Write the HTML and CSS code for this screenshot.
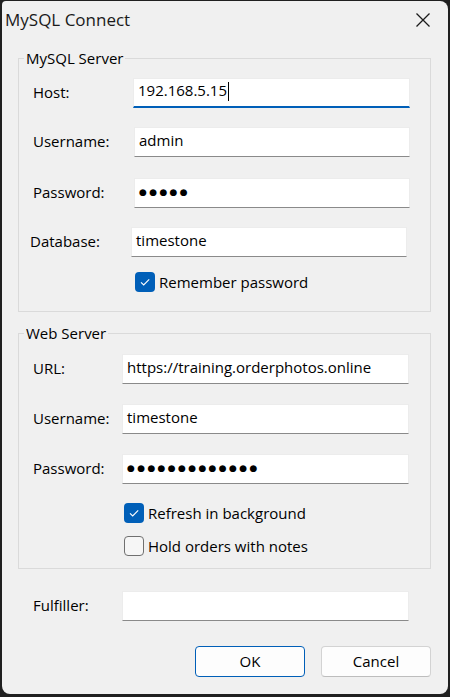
FILE: index.html
```html
<!DOCTYPE html>
<html lang="en">
<head>
<meta charset="utf-8">
<title>MySQL Connect</title>
<link rel="stylesheet" href="styles.css">
</head>
<body>
<div class="window">
  <div class="titlebar">
    <span class="title">MySQL Connect</span>
    <span class="close">
      <svg width="16" height="16" viewBox="0 0 16 16"><path d="M1.5 1.5 L14.5 14.5 M14.5 1.5 L1.5 14.5" stroke="#1b1b1b" stroke-width="1.3" fill="none"/></svg>
    </span>
  </div>
  <div class="content">
    <fieldset class="group g1">
      <legend>MySQL Server</legend>
      <div class="row">
        <span class="lbl w100">Host:</span>
        <div class="edit focused w277">192.168.5.15<span class="caret"></span></div>
      </div>
      <div class="row mt19">
        <span class="lbl w101">Username:</span>
        <div class="edit w276">admin</div>
      </div>
      <div class="row mt21">
        <span class="lbl w101">Password:</span>
        <div class="edit w276"><span class="dots">●●●●●</span></div>
      </div>
      <div class="row mt19 shift-left">
        <span class="lbl w101">Database:</span>
        <div class="edit w276">timestone</div>
      </div>
      <div class="check mt15 ind102">
        <svg class="box" width="20" height="20" viewBox="0 0 20 20"><rect x="0" y="0" width="20" height="20" rx="4" fill="#005fb8"/><path d="M6 10.3 L8.7 13 L14.2 7.4" stroke="#fff" stroke-width="1.1" fill="none"/></svg>
        <span class="ctext">Remember password</span>
      </div>
    </fieldset>

    <fieldset class="group g2">
      <legend>Web Server</legend>
      <div class="row">
        <span class="lbl w89">URL:</span>
        <div class="edit w287">https://training.orderphotos.online</div>
      </div>
      <div class="row mt20">
        <span class="lbl w89">Username:</span>
        <div class="edit w287">timestone</div>
      </div>
      <div class="row mt20">
        <span class="lbl w89">Password:</span>
        <div class="edit w287"><span class="dots">●●●●●●●●●●●●●</span></div>
      </div>
      <div class="check mt19 ind91">
        <svg class="box" width="20" height="20" viewBox="0 0 20 20"><rect x="0" y="0" width="20" height="20" rx="4" fill="#005fb8"/><path d="M6 10.3 L8.7 13 L14.2 7.4" stroke="#fff" stroke-width="1.1" fill="none"/></svg>
        <span class="ctext">Refresh in background</span>
      </div>
      <div class="check mt13 ind91">
        <svg class="box" width="20" height="20" viewBox="0 0 20 20"><rect x="0.5" y="0.5" width="19" height="19" rx="3.5" fill="#f6f6f6" stroke="#707070"/></svg>
        <span class="ctext">Hold orders with notes</span>
      </div>
    </fieldset>

    <div class="row mt22 fulfiller">
      <span class="lbl w89">Fulfiller:</span>
      <div class="edit w287"></div>
    </div>

    <div class="buttons">
      <button class="btn default">OK</button>
      <button class="btn">Cancel</button>
    </div>
  </div>
</div>
</body>
</html>
```
FILE: styles.css
```css
html, body {
  margin: 0;
  padding: 0;
}
body {
  background: #1f1f1f;
  font-family: "Open Sans", "Noto Sans", sans-serif;
  font-size: 15px;
  color: #000;
}
.window {
  margin: 1px 2px 0 2px;
  height: 693px;
  background: #f0f0f0;
  border-radius: 4px 8px 8px 8px;
  overflow: hidden;
  display: flex;
  flex-direction: column;
}
.titlebar {
  height: 37px;
  display: flex;
  align-items: center;
  justify-content: space-between;
  padding-left: 3px;
}
.title {
  font-size: 17px;
  color: #1a1a1a;
  line-height: 23px;
  padding-bottom: 1px;
}
.close {
  width: 50px;
  height: 37px;
  display: flex;
  align-items: center;
  justify-content: center;
}
.content {
  padding: 0 17px 0 16px;
  display: flex;
  flex-direction: column;
}
.group {
  border: 1px solid #dadada;
  margin: 11px 0 0 0;
  padding: 10px 0 19px 0;
  min-width: 0;
}
.g2 {
  margin-top: 12px;
  padding-top: 11px;
  padding-bottom: 12px;
}
legend {
  padding: 0 2px;
  margin-left: 5px;
  line-height: 19px;
  font-size: 15px;
}
.row {
  display: flex;
  align-items: center;
  height: 30px;
  margin-left: 14px;
}
.shift-left { margin-left: 11px; }
.fulfiller { margin-left: 15px; }
.lbl {
  line-height: 20px;
  padding-bottom: 2px;
  flex: none;
}
.w89 { width: 89px; }
.w100 { width: 100px; }
.w101 { width: 101px; }
.mt13 { margin-top: 13px; }
.mt15 { margin-top: 15px; }
.mt19 { margin-top: 19px; }
.mt20 { margin-top: 20px; }
.mt21 { margin-top: 21px; }
.mt22 { margin-top: 22px; }
.edit {
  box-sizing: border-box;
  height: 30px;
  background: #fff;
  border: 1px solid #ececec;
  border-bottom-color: #8a8a8a;
  padding: 0 4px 5px 4px;
  display: flex;
  align-items: center;
  line-height: 20px;
  white-space: nowrap;
  flex: none;
}
.edit.focused {
  border-bottom: 2px solid #005fb8;
}
.w276 { width: 276px; }
.w277 { width: 277px; }
.w287 { width: 287px; }
.caret {
  display: inline-block;
  width: 1px;
  height: 19px;
  background: #000;
  margin-left: 1px;
  margin-top: 3px;
}
.dots {
  font-family: "DejaVu Sans", sans-serif;
  font-size: 9px;
  letter-spacing: 2.35px;
  line-height: 20px;
  padding-top: 2px;
}
.check {
  display: flex;
  align-items: center;
  height: 20px;
  gap: 4px;
}
.ctext {
  line-height: 20px;
  margin-top: -1px;
}
.ind102 { margin-left: 116px; }
.ind91 { margin-left: 105px; }
.box { flex: none; display: block; }
.buttons {
  display: flex;
  justify-content: flex-end;
  gap: 16px;
  margin-top: 25px;
}
.btn {
  box-sizing: border-box;
  width: 110px;
  height: 31px;
  border-radius: 4px;
  background: #fdfdfd;
  border: 1px solid #d3d3d3;
  border-bottom-color: #bdbdbd;
  font-family: "Open Sans", "Noto Sans", sans-serif;
  font-size: 15px;
  color: #000;
  padding: 0 0 2px 0;
}
.btn.default {
  border: 1px solid #005fb8;
}
```
